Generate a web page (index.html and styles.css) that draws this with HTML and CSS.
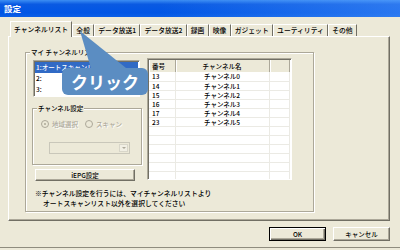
FILE: index.html
```html
<!DOCTYPE html>
<html lang="ja">
  <head>
    <meta charset="UTF-8" />
    <title>設定</title>
    <link rel="stylesheet" href="styles.css">
  </head>
  <body>
    <div class="window">
      <div class="titlebar">設定</div>

      <!-- タブ -->
      <div class="tabs">
        <div class="tab active">チャンネルリスト</div>
        <div class="tab">全般</div>
        <div class="tab">データ放送1</div>
        <div class="tab">データ放送2</div>
        <div class="tab">録画</div>
        <div class="tab">映像</div>
        <div class="tab">ガジェット</div>
        <div class="tab">ユーティリティ</div>
        <div class="tab">その他</div>
      </div>

      <div class="panel">
        <fieldset class="group">
          <legend>マイ チャンネルリスト</legend>
          <div class="group-body">
            <div class="left">
              <div class="listbox">
                <div class="item selected">1:オートスキャンリスト</div>
                <div class="item">2:</div>
                <div class="item">3:</div>
              </div>

              <fieldset class="subgroup">
                <legend>チャンネル設定</legend>
                <div class="radios">
                  <span class="radio checked"></span>
                  <span class="radio-label">地域選択</span>
                  <span class="radio"></span>
                  <span class="radio-label">スキャン</span>
                </div>
                <div class="combo"><span class="combo-btn"></span></div>
              </fieldset>

              <button class="btn epg">iEPG設定</button>
              <div class="note">
                <div>※チャンネル設定を行うには、マイチャンネルリストより</div>
                <div class="indent">オートスキャンリスト以外を選択してください</div>
              </div>
            </div>

            <div class="listview">
              <table>
                <colgroup><col class="c1"><col class="c2"><col></colgroup>
                <thead>
                  <tr><th class="num">番号</th><th>チャンネル名</th><th></th></tr>
                </thead>
                <tbody>
                  <tr><td class="num">13</td><td>チャンネル0</td><td></td></tr>
                  <tr><td class="num">14</td><td>チャンネル1</td><td></td></tr>
                  <tr><td class="num">15</td><td>チャンネル2</td><td></td></tr>
                  <tr><td class="num">16</td><td>チャンネル3</td><td></td></tr>
                  <tr><td class="num">17</td><td>チャンネル4</td><td></td></tr>
                  <tr><td class="num">23</td><td>チャンネル5</td><td></td></tr>
                  <tr><td></td><td></td><td></td></tr>
                  <tr><td></td><td></td><td></td></tr>
                  <tr><td></td><td></td><td></td></tr>
                  <tr><td></td><td></td><td></td></tr>
                  <tr><td></td><td></td><td></td></tr>
                  <tr><td></td><td></td><td></td></tr>
                  <tr><td></td><td></td><td></td></tr>
                </tbody>
              </table>
            </div>
          </div>
        </fieldset>
      </div>

      <div class="buttons">
        <button class="btn default">OK</button>
        <button class="btn">キャンセル</button>
      </div>

      <!-- 吹き出し -->
      <div class="callout">
        <svg class="tail" width="140" height="80" viewBox="0 0 140 80">
          <polygon points="80,31 92,72 131,72" fill="#5b8dc2" />
        </svg>
        <div class="bubble">クリック</div>
      </div>
    </div>
  </body>
</html>
```

FILE: styles.css
```css
* {
  box-sizing: border-box;
}
body {
  margin: 0;
  width: 400px;
  height: 250px;
  overflow: hidden;
  background-color: #ece9d8;
  font-family: "Noto Sans CJK JP", "Noto Sans", sans-serif;
  font-size: 6.5px;
  font-weight: 500;
  color: #000;
}
.window {
  position: relative;
  height: 248px;
  border-bottom: 1px solid #8f8c7e;
}
.titlebar {
  height: 17px;
  line-height: 17px;
  padding-left: 4px;
  color: white;
  font-weight: bold;
  font-size: 8.5px;
  background: linear-gradient(to right, rgba(90, 160, 255, 0) 40%, rgba(90, 160, 255, 0.45)),
    linear-gradient(#3c8ef3, #0a5ae2 25%, #0055e5 75%, #0b5fe6);
}

/* tabs */
.tabs {
  position: relative;
  z-index: 1;
  display: flex;
  align-items: flex-end;
  height: 19px;
  margin-left: 10px;
}
.tab {
  height: 12px;
  line-height: 11px;
  padding: 0 3.2px;
  border-top: 1px solid #fff;
  border-left: 1px solid #fff;
  border-right: 1px solid #716f64;
  font-size: 6.8px;
  white-space: nowrap;
}
.tab.active {
  height: 16px;
  line-height: 14px;
  margin-bottom: -1px;
  padding: 0 3px;
  background-color: #ece9d8;
}

.panel {
  height: 185px;
  margin: 0 10px 0 8px;
  padding: 11px 0 0 16px;
  border: 1px solid;
  border-color: #fff #716f64 #716f64 #fff;
  box-shadow: inset -1px -1px #aca899;
}

/* group boxes */
.group,
.subgroup {
  margin: 0;
  border: 1px solid #aca899;
  box-shadow: inset 1px 1px #fff, 1px 1px #fff;
}
.group legend,
.subgroup legend {
  line-height: 9px;
  padding: 0 1px;
  background-color: #ece9d8;
}
.group {
  width: 289px;
  height: 164px;
  padding: 1px 0 0 6px;
}
.group legend {
  margin-left: -2px;
}
.group-body {
  display: flex;
  align-items: flex-start;
}
.left {
  width: 110px;
}

.listbox {
  width: 107px;
  height: 37px;
  margin: 2px 0 0 1px;
  padding: 1px;
  background-color: white;
  border: 1px solid;
  border-color: #aca899 #fff #fff #aca899;
  box-shadow: inset 1px 1px #716f64;
}
.item {
  height: 11px;
  line-height: 11px;
  padding-left: 1px;
  white-space: nowrap;
  overflow: hidden;
}
.item.selected {
  background-color: #316ac5;
  color: white;
}

.subgroup {
  width: 110px;
  height: 61px;
  margin-top: 7px;
  padding: 0 0 0 8px;
}
.subgroup legend {
  margin-left: -4px;
}
.radios {
  display: flex;
  align-items: center;
  height: 9px;
  margin-top: 6px;
  color: #aca899;
  text-shadow: 1px 1px 0 #fff;
}
.radio {
  position: relative;
  width: 8px;
  height: 8px;
  border: 1px solid #aca899;
  border-radius: 50%;
  background-color: #ece9d8;
}
.radio.checked::after {
  content: "";
  position: absolute;
  left: 2px;
  top: 2px;
  width: 2px;
  height: 2px;
  border-radius: 50%;
  background-color: #aca899;
}
.radio-label {
  margin: 0 7px 0 3px;
}
.combo {
  display: flex;
  justify-content: flex-end;
  width: 81px;
  height: 12px;
  margin: 14px 0 0 8px;
  padding: 1px;
  border: 1px solid #c9c7ba;
  background-color: #ece9d8;
}
.combo-btn {
  position: relative;
  width: 9px;
  height: 8px;
  border: 1px solid #d8d6c9;
  background-color: #f1efe4;
}
.combo-btn::after {
  content: "";
  position: absolute;
  left: 2px;
  top: 2px;
  border-left: 2px solid transparent;
  border-right: 2px solid transparent;
  border-top: 2px solid #aca899;
}

.btn {
  height: 14px;
  padding: 0;
  font-family: inherit;
  font-size: 6.5px;
  font-weight: 500;
  color: #000;
  background-color: #ece9d8;
  border: 1px solid;
  border-color: #fff #716f64 #716f64 #fff;
  box-shadow: inset -1px -1px #aca899;
}
.btn.epg {
  display: block;
  width: 100px;
  height: 12px;
  margin: 4px 0 0 3px;
}
.note {
  margin: 7px 0 0 3px;
  line-height: 10px;
  font-size: 6.8px;
  white-space: nowrap;
}
.note .indent {
  padding-left: 8px;
}

/* list view */
.listview {
  width: 145px;
  height: 122px;
  margin-left: 5px;
  padding: 1px;
  overflow: hidden;
  background-color: white;
  border: 1px solid;
  border-color: #aca899 #fff #fff #aca899;
  box-shadow: inset 1px 1px #716f64;
}
.listview table {
  width: 100%;
  border-collapse: collapse;
  table-layout: fixed;
}
.listview col.c1 {
  width: 26px;
}
.listview col.c2 {
  width: 94px;
}
.listview th {
  height: 12px;
  padding: 0;
  font-weight: 500;
  background-color: #ece9d8;
  border-right: 1px solid #aca899;
  box-shadow: inset 1px 0 #fff;
}
.listview td {
  height: 9px;
  padding: 0;
  line-height: 8px;
  text-align: center;
  border-right: 1px solid #ebeae4;
  border-bottom: 1px solid #ebeae4;
}
.listview .num {
  text-align: left;
  padding-left: 3px;
}

.buttons {
  display: flex;
  justify-content: flex-end;
  gap: 7px;
  margin-top: 6px;
  padding-right: 10px;
}
.buttons .btn {
  width: 57px;
}
.buttons .btn.default {
  border-color: #000;
  box-shadow: inset 1px 1px #fff, inset -1px -1px #716f64, inset -2px -2px #aca899;
}

/* callout */
.callout {
  position: absolute;
  left: 0;
  top: 0;
  z-index: 5;
}
.tail {
  position: absolute;
  left: 0;
  top: 0;
}
.bubble {
  position: absolute;
  left: 62px;
  top: 68px;
  width: 86px;
  height: 27px;
  line-height: 27px;
  border-radius: 6px;
  background-color: #5b8dc2;
  color: white;
  font-size: 17px;
  font-weight: bold;
  text-align: center;
  white-space: nowrap;
}
```
